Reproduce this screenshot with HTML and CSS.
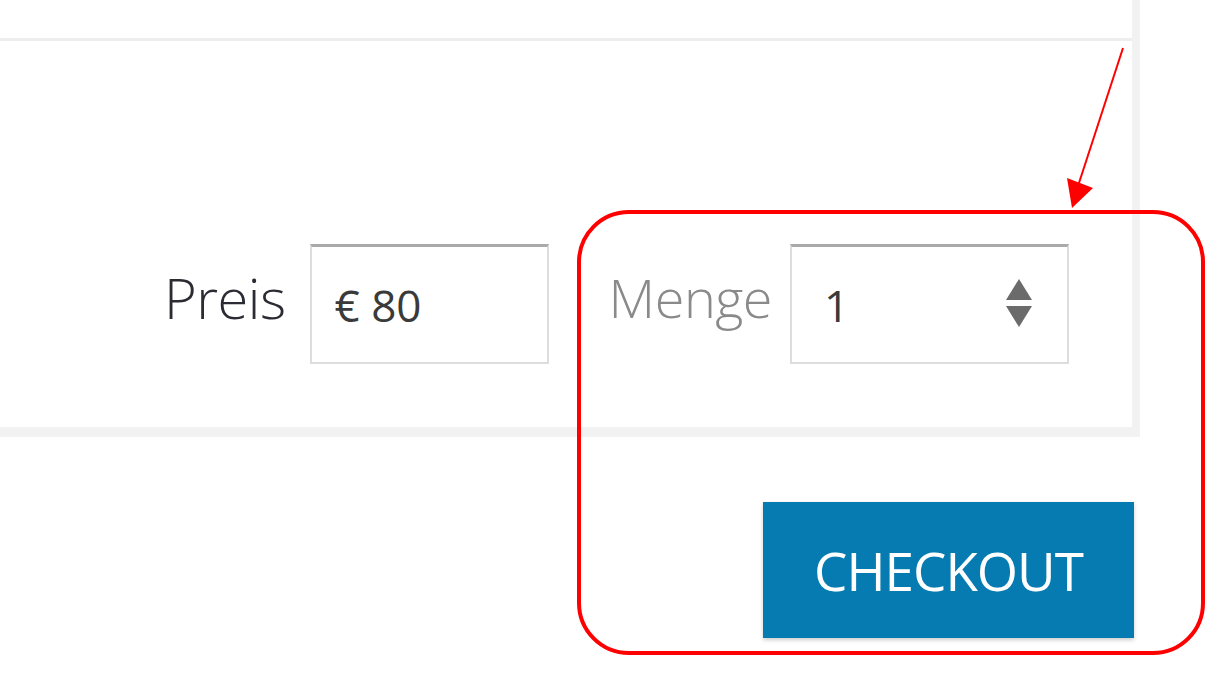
FILE: index.html
```html
<!DOCTYPE html>
<html lang="de">
<head>
    <meta charset="UTF-8">
    <meta name="viewport" content="width=device-width, initial-scale=1.0">
    <title>Checkout</title>
    <link rel="stylesheet" href="styles.css">
</head>
<body>

    <div class="panel">
        <div class="panel-head"></div>
        <div class="panel-body">
            <label class="field-label">Preis</label>
            <div class="field price-field">€ 80</div>
            <label class="field-label muted">Menge</label>
            <div class="field qty-field">
                <span>1</span>
                <svg class="spinner" width="26" height="48" viewBox="0 0 26 48">
                    <polygon points="13,0 26,21 0,21" fill="#6b6b6b"/>
                    <polygon points="0,27 26,27 13,48" fill="#6b6b6b"/>
                </svg>
            </div>
        </div>
    </div>

    <div class="actions">
        <button class="btn-checkout">CHECKOUT</button>
    </div>

    <!-- annotation drawn over the screenshot -->
    <svg class="markup" width="1207" height="673" viewBox="0 0 1207 673">
        <line x1="1123" y1="48" x2="1078" y2="186" stroke="#ff0000" stroke-width="2"/>
        <polygon points="1067,178 1093,188 1072,208" fill="#ff0000"/>
        <rect x="579" y="212" width="624" height="441" rx="50" ry="50" fill="none" stroke="#ff0000" stroke-width="4"/>
    </svg>

</body>
</html>
```

FILE: styles.css
```css
body {
    margin: 0;
    background-color: #ffffff;
    font-family: 'Open Sans', 'Noto Sans', sans-serif;
    color: #333333;
    position: relative;
    width: 1207px;
    height: 673px;
    overflow: hidden;
}

.panel {
    width: 1132px;
    background-color: #ffffff;
    border-right: 8px solid #f2f2f2;
    border-bottom: 10px solid #f2f2f2;
}

.panel-head {
    height: 38px;
    border-bottom: 3px solid #eeeeee;
}

.panel-body {
    display: flex;
    justify-content: flex-end;
    align-items: center;
    padding: 203px 63px 63px 0;
}

.field-label {
    font-size: 56px;
    font-weight: 300;
    color: #2b2b33;
    margin-right: 24px;
    letter-spacing: -0.5px;
    padding-bottom: 14px;
}

.field-label.muted {
    font-size: 54px;
    color: #8a8a8a;
    margin-left: 60px;
    margin-right: 18px;
}

.field {
    box-sizing: border-box;
    height: 120px;
    border: 2px solid #dddddd;
    border-top: 3px solid #aaaaaa;
    display: flex;
    align-items: center;
    font-size: 44px;
    color: #3a3a3a;
}

.price-field {
    width: 239px;
    padding-left: 23px;
}

.qty-field {
    width: 279px;
    padding-left: 32px;
    padding-right: 35px;
    justify-content: space-between;
}

.spinner {
    margin-top: -4px;
}

.actions {
    width: 1134px;
    display: flex;
    justify-content: flex-end;
    padding-top: 65px;
}

.btn-checkout {
    width: 371px;
    height: 136px;
    background-color: #057bb1;
    color: #ffffff;
    border: none;
    border-radius: 0;
    font-family: 'Open Sans', 'Noto Sans', sans-serif;
    font-size: 53px;
    font-weight: 500;
    letter-spacing: -1px;
    padding: 0;
    box-shadow: 0 2px 4px rgba(0, 0, 0, 0.2);
}

.markup {
    position: absolute;
    top: 0;
    left: 0;
    pointer-events: none;
}
```
